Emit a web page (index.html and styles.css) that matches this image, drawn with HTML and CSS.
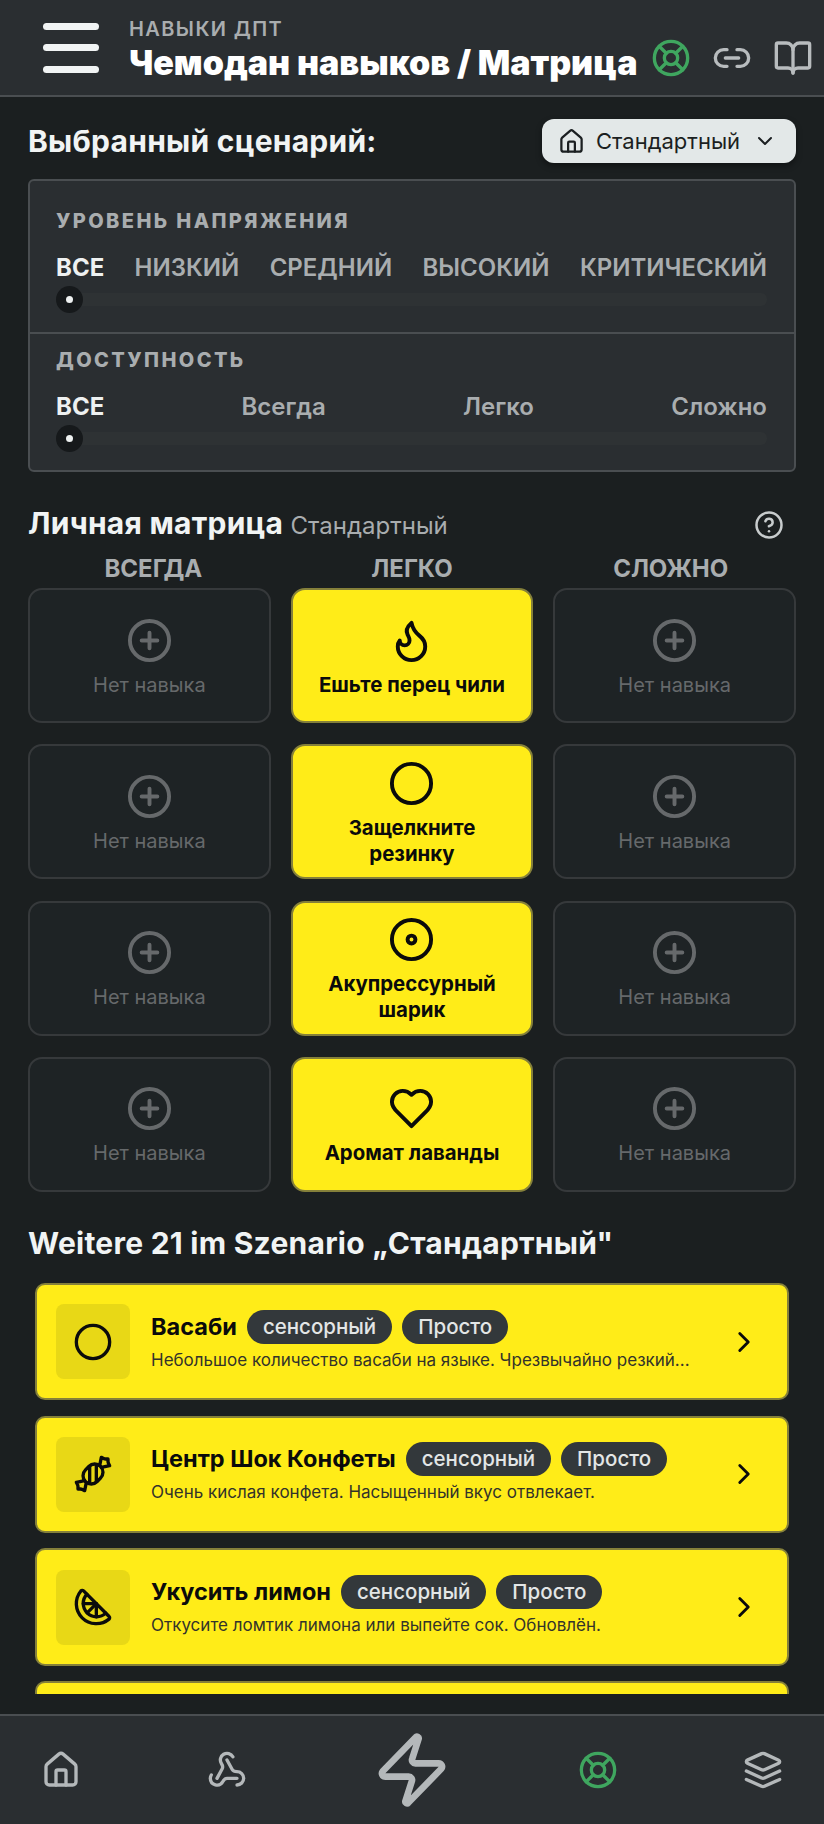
FILE: index.html
```html
<!DOCTYPE html>
<html>
<head>
    <title>Навыки ДПТ</title>
    <link rel="stylesheet" href="styles.css">
</head>
<body>
    <svg class="sprite" width="0" height="0">
        <symbol id="i-buoy" viewBox="0 0 24 24"><circle cx="12" cy="12" r="10"/><path d="m4.93 4.93 4.24 4.24M14.83 9.17l4.24-4.24M14.83 14.83l4.24 4.24M9.17 14.83l-4.24 4.24"/><circle cx="12" cy="12" r="4"/></symbol>
        <symbol id="i-link" viewBox="0 0 24 24"><path d="M9 17H7A5 5 0 0 1 7 7h2"/><path d="M15 7h2a5 5 0 1 1 0 10h-2"/><path d="M8 12h8"/></symbol>
        <symbol id="i-book" viewBox="0 0 24 24"><path d="M12 7v14"/><path d="M3 18a1 1 0 0 1-1-1V4a1 1 0 0 1 1-1h5a4 4 0 0 1 4 4 4 4 0 0 1 4-4h5a1 1 0 0 1 1 1v13a1 1 0 0 1-1 1h-6a3 3 0 0 0-3 3 3 3 0 0 0-3-3z"/></symbol>
        <symbol id="i-house" viewBox="0 0 24 24"><path d="M15 21v-8a1 1 0 0 0-1-1h-4a1 1 0 0 0-1 1v8"/><path d="M3 10a2 2 0 0 1 .709-1.528l7-5.999a2 2 0 0 1 2.582 0l7 5.999A2 2 0 0 1 21 10v9a2 2 0 0 1-2 2H5a2 2 0 0 1-2-2z"/></symbol>
        <symbol id="i-webhook" viewBox="0 0 24 24"><path d="M18 16.98h-5.99c-1.1 0-1.95.94-2.48 1.9A4 4 0 0 1 2 17c.01-.7.2-1.4.57-2"/><path d="m6 17 3.13-5.78c.53-.97.1-2.18-.5-3.1a4 4 0 1 1 6.89-4.06"/><path d="m12 6 3.13 5.73C15.66 12.7 16.9 13 18 13a4 4 0 0 1 0 8"/></symbol>
        <symbol id="i-zap" viewBox="0 0 24 24"><path d="M4 14a1 1 0 0 1-.78-1.63l9.9-10.2a.5.5 0 0 1 .86.46l-1.92 6.02A1 1 0 0 0 13 10h7a1 1 0 0 1 .78 1.63l-9.9 10.2a.5.5 0 0 1-.86-.46l1.92-6.02A1 1 0 0 0 11 14z"/></symbol>
        <symbol id="i-layers" viewBox="0 0 24 24"><path d="M12.83 2.18a2 2 0 0 0-1.66 0L2.6 6.08a1 1 0 0 0 0 1.83l8.58 3.91a2 2 0 0 0 1.66 0l8.58-3.9a1 1 0 0 0 0-1.83Z"/><path d="m22 17.65-9.17 4.16a2 2 0 0 1-1.66 0L2 17.65"/><path d="m22 12.65-9.17 4.16a2 2 0 0 1-1.66 0L2 12.65"/></symbol>
        <symbol id="i-flame" viewBox="0 0 24 24"><path d="M8.5 14.5A2.5 2.5 0 0 0 11 12c0-1.38-.5-2-1-3-1.072-2.143-.224-4.054 2-6 .5 2.5 2 4.9 4 6.5 2 1.6 3 3.5 3 5.5a7 7 0 1 1-14 0c0-1.153.433-2.294 1-3a2.5 2.5 0 0 0 2.5 2.5z"/></symbol>
        <symbol id="i-circle" viewBox="0 0 24 24"><circle cx="12" cy="12" r="10"/></symbol>
        <symbol id="i-disc" viewBox="0 0 24 24"><circle cx="12" cy="12" r="10"/><circle cx="12" cy="12" r="2"/></symbol>
        <symbol id="i-heart" viewBox="0 0 24 24"><path d="M19 14c1.49-1.46 3-3.21 3-5.5A5.5 5.5 0 0 0 16.5 3c-1.76 0-3 .5-4.5 2-1.5-1.5-2.74-2-4.5-2A5.5 5.5 0 0 0 2 8.5c0 2.3 1.5 4.05 3 5.5l7 7Z"/></symbol>
        <symbol id="i-plus" viewBox="0 0 24 24"><circle cx="12" cy="12" r="10"/><path d="M8 12h8M12 8v8"/></symbol>
        <symbol id="i-help" viewBox="0 0 24 24"><circle cx="12" cy="12" r="10"/><path d="M9.09 9a3 3 0 0 1 5.83 1c0 2-3 3-3 3"/><path d="M12 17h.01"/></symbol>
        <symbol id="i-candy" viewBox="0 0 24 24"><path d="m9.5 7.5-2 2a4.95 4.95 0 1 0 7 7l2-2a4.95 4.95 0 1 0-7-7Z"/><path d="M14 6.5v10"/><path d="M10 7.5v10"/><path d="m16 7 1-5 1.37.68A3 3 0 0 0 19.7 3H21v1.3c0 .46.1.92.32 1.33L22 7l-5 1"/><path d="m8 17-1 5-1.37-.68A3 3 0 0 0 4.3 21H3v-1.3a3 3 0 0 0-.32-1.33L2 17l5-1"/></symbol>
        <symbol id="i-citrus" viewBox="0 0 24 24"><path d="M21.66 17.67a1.08 1.08 0 0 1-.04 1.6A12 12 0 0 1 4.73 2.38a1.1 1.1 0 0 1 1.61-.04z"/><path d="M19.65 15.66A8 8 0 0 1 8.35 4.34"/><path d="m14 10-5.5 5.5"/><path d="M14 17.85V10H6.15"/></symbol>
        <symbol id="i-right" viewBox="0 0 24 24"><path d="m9 18 6-6-6-6"/></symbol>
        <symbol id="i-down" viewBox="0 0 24 24"><path d="m6 9 6 6 6-6"/></symbol>
    </svg>

    <div class="app">
        <header class="topbar">
            <div class="burger"><span></span><span></span><span></span></div>
            <div class="titles">
                <div class="kicker">НАВЫКИ ДПТ</div>
                <h1>Чемодан навыков / Матрица</h1>
            </div>
            <svg class="icon top-buoy"><use href="#i-buoy"/></svg>
            <svg class="icon top-link"><use href="#i-link"/></svg>
            <svg class="icon top-book"><use href="#i-book"/></svg>
        </header>

        <main class="content">
            <div class="scenario-row">
                <h2>Выбранный сценарий:</h2>
                <div class="select">
                    <svg class="icon select-home"><use href="#i-house"/></svg>
                    <span>Стандартный</span>
                    <svg class="icon"><use href="#i-down"/></svg>
                </div>
            </div>

            <section class="filters">
                <div class="filter">
                    <div class="filter-label">УРОВЕНЬ НАПРЯЖЕНИЯ</div>
                    <div class="steps"><b>ВСЕ</b><span>НИЗКИЙ</span><span>СРЕДНИЙ</span><span>ВЫСОКИЙ</span><span>КРИТИЧЕСКИЙ</span></div>
                    <div class="track"><i class="thumb"></i></div>
                </div>
                <div class="filter">
                    <div class="filter-label">ДОСТУПНОСТЬ</div>
                    <div class="steps"><b>ВСЕ</b><span>Всегда</span><span>Легко</span><span>Сложно</span></div>
                    <div class="track"><i class="thumb"></i></div>
                </div>
            </section>

            <div class="matrix-head">
                <h2>Личная матрица <small>Стандартный</small></h2>
                <svg class="icon"><use href="#i-help"/></svg>
            </div>

            <div class="col-titles">
                <div>ВСЕГДА</div><div>ЛЕГКО</div><div>СЛОЖНО</div>
            </div>

            <div class="matrix">
                <div class="slot"><svg class="icon"><use href="#i-plus"/></svg><span>Нет навыка</span></div>
                <div class="slot filled"><svg class="icon"><use href="#i-flame"/></svg><span>Ешьте перец чили</span></div>
                <div class="slot"><svg class="icon"><use href="#i-plus"/></svg><span>Нет навыка</span></div>

                <div class="slot"><svg class="icon"><use href="#i-plus"/></svg><span>Нет навыка</span></div>
                <div class="slot filled"><svg class="icon"><use href="#i-circle"/></svg><span>Защелкните резинку</span></div>
                <div class="slot"><svg class="icon"><use href="#i-plus"/></svg><span>Нет навыка</span></div>

                <div class="slot"><svg class="icon"><use href="#i-plus"/></svg><span>Нет навыка</span></div>
                <div class="slot filled"><svg class="icon"><use href="#i-disc"/></svg><span>Акупрессурный шарик</span></div>
                <div class="slot"><svg class="icon"><use href="#i-plus"/></svg><span>Нет навыка</span></div>

                <div class="slot"><svg class="icon"><use href="#i-plus"/></svg><span>Нет навыка</span></div>
                <div class="slot filled"><svg class="icon"><use href="#i-heart"/></svg><span>Аромат лаванды</span></div>
                <div class="slot"><svg class="icon"><use href="#i-plus"/></svg><span>Нет навыка</span></div>
            </div>

            <h2 class="more-title">Weitere 21 im Szenario „Стандартный"</h2>

            <div class="skill-list">
                <div class="skill">
                    <div class="skill-icon"><svg class="icon"><use href="#i-circle"/></svg></div>
                    <div class="skill-body">
                        <div class="skill-top"><strong>Васаби</strong><em>сенсорный</em><em>Просто</em></div>
                        <p>Небольшое количество васаби на языке. Чрезвычайно резкий...</p>
                    </div>
                    <svg class="icon chevron"><use href="#i-right"/></svg>
                </div>
                <div class="skill">
                    <div class="skill-icon"><svg class="icon"><use href="#i-candy"/></svg></div>
                    <div class="skill-body">
                        <div class="skill-top"><strong>Центр Шок Конфеты</strong><em>сенсорный</em><em>Просто</em></div>
                        <p>Очень кислая конфета. Насыщенный вкус отвлекает.</p>
                    </div>
                    <svg class="icon chevron"><use href="#i-right"/></svg>
                </div>
                <div class="skill">
                    <div class="skill-icon"><svg class="icon"><use href="#i-citrus"/></svg></div>
                    <div class="skill-body">
                        <div class="skill-top"><strong>Укусить лимон</strong><em>сенсорный</em><em>Просто</em></div>
                        <p>Откусите ломтик лимона или выпейте сок. Обновлён.</p>
                    </div>
                    <svg class="icon chevron"><use href="#i-right"/></svg>
                </div>
                <div class="skill"></div>
            </div>
        </main>

        <nav class="tabbar">
            <svg class="icon"><use href="#i-house"/></svg>
            <svg class="icon"><use href="#i-webhook"/></svg>
            <svg class="icon tab-zap"><use href="#i-zap"/></svg>
            <svg class="icon tab-active"><use href="#i-buoy"/></svg>
            <svg class="icon"><use href="#i-layers"/></svg>
        </nav>
    </div>
</body>
</html>
```

FILE: styles.css
```css
* { box-sizing: border-box; }
html, body { margin: 0; height: 100%; }
body { background: #1b1f20; color: #f1f4f4; font-family: Inter, "Noto Sans", sans-serif; }
h1, h2, p { margin: 0; }
.sprite { display: block; }
.icon { width: 24px; height: 24px; fill: none; stroke: currentColor; stroke-width: 2; stroke-linecap: round; stroke-linejoin: round; flex: none; }

.app { height: 1824px; display: flex; flex-direction: column; overflow: hidden; }

.topbar { height: 97px; flex: none; display: flex; align-items: center; padding: 0 11px 0 43px; background: #2a2e31; border-bottom: 2px solid #4a4e51; }
.burger { width: 56px; height: 50px; display: flex; flex-direction: column; justify-content: space-between; margin-right: 30px; flex: none; }
.burger span { height: 7px; border-radius: 4px; background: #f1f4f4; }
.titles { flex: 1; min-width: 0; align-self: flex-start; padding-top: 17px; }
.kicker { font-size: 20px; line-height: 24px; font-weight: 600; letter-spacing: 1.4px; color: #a9adaf; }
h1 { margin-top: 1px; font-size: 34px; line-height: 42px; font-weight: 900; letter-spacing: 0; color: #fff; white-space: nowrap; }
.top-buoy { width: 40px; height: 40px; color: #3fa65f; margin-top: 21px; }
.top-link { width: 40px; height: 40px; color: #b8bcbe; margin: 21px 0 0 21px; }
.top-book { width: 40px; height: 40px; color: #b8bcbe; margin: 21px 0 0 21px; }

.content { flex: 1; min-height: 0; overflow: hidden; padding: 0 28px; margin-bottom: 20px; }

.scenario-row { display: flex; justify-content: space-between; align-items: center; padding: 22px 0 16px; }
h2 { font-size: 30px; line-height: 36px; font-weight: 700; letter-spacing: 0.25px; }
.select { width: 254px; height: 44px; display: flex; align-items: center; gap: 11px; padding: 0 19px 0 16px; border-radius: 12px; background: #e3e8e8; color: #1b1f21; font-size: 22px; box-shadow: 0 3px 6px rgba(0,0,0,0.4); }
.select span { flex: 1; }
.select-home { width: 27px; height: 27px; }

.filters { border: 2px solid #4a4e51; border-radius: 6px; background: #2a2e31; }
.filter { padding: 28px 27px 0 26px; height: 151px; }
.filter + .filter { border-top: 2px solid #4a4e51; height: 138px; padding-top: 14px; }
.filter-label { font-size: 20px; line-height: 24px; font-weight: 800; letter-spacing: 2.4px; color: #a9adaf; }
.steps { display: flex; justify-content: space-between; margin-top: 19px; font-size: 24px; line-height: 32px; font-weight: 600; color: #a9adaf; }
.steps b { color: #eef1f1; font-weight: 700; }
.track { position: relative; height: 13px; margin-top: 9px; border-radius: 6px; background: #2e3234; }
.thumb { position: absolute; left: 0; top: -7px; width: 27px; height: 27px; border-radius: 50%; background: #16191b; }
.thumb::after { content: ""; position: absolute; left: 10px; top: 10px; width: 7px; height: 7px; border-radius: 50%; background: #eef1f1; }

.matrix-head { display: flex; justify-content: space-between; align-items: center; padding: 33px 12px 0 0; }
.matrix-head .icon { width: 30px; height: 30px; color: #c8cccd; }
small { font-size: 24px; font-weight: 400; letter-spacing: 0; color: #a9adaf; }

.col-titles { display: grid; grid-template-columns: repeat(3, 1fr); gap: 20px; padding: 0 6px; margin-top: 10px; text-align: center; font-size: 24px; line-height: 30px; font-weight: 700; color: #a9adaf; }

.matrix { display: grid; grid-template-columns: repeat(3, 1fr); gap: 21.33px 20px; margin-top: 4px; }
.slot { height: 135px; display: flex; flex-direction: column; align-items: center; justify-content: center; padding: 3px 14px 0; gap: 8px; border: 2px solid #36393b; border-radius: 14px; background: #1e2325; color: #66696b; text-align: center; font-size: 20px; line-height: 26px; }
.slot .icon { width: 47px; height: 47px; }
.slot.filled { background: #ffec18; border-color: #85803a; color: #0b0b0b; font-size: 20.4px; font-weight: 700; }

.more-title { margin-top: 33.5px; }

.skill-list { display: flex; flex-direction: column; gap: 15.2px; margin: 21.5px 7px 0; }
.skill { height: 117.5px; flex: none; display: flex; align-items: center; padding: 0 26px 0 19px; border: 2px solid #85803a; border-radius: 10px; background: #ffec18; color: #0b0b0b; }
.skill-icon { width: 74px; height: 75px; display: flex; align-items: center; justify-content: center; border-radius: 8px; background: #e8d816; flex: none; margin-right: 21px; }
.skill-icon .icon { width: 40px; height: 40px; }
.skill-body { flex: 1; min-width: 0; margin-top: -3px; }
.skill-top { display: flex; align-items: center; gap: 10px; }
.skill-top strong { font-size: 23.5px; line-height: 34px; font-weight: 700; }
.skill-top em { height: 34px; padding: 0 16px; border-radius: 17px; background: #33383b; color: #e3e6e6; font-style: normal; font-weight: 500; font-size: 20.5px; line-height: 33px; }
.skill p { font-size: 17px; line-height: 22px; margin-top: 5px; color: #33332a; white-space: nowrap; }
.chevron { width: 34px; height: 34px; }

.tabbar { height: 110px; flex: none; display: flex; align-items: center; justify-content: space-between; padding: 0 41px; background: #2a2e31; border-top: 2px solid #4a4e51; color: #b4b8ba; }
.tabbar .icon { width: 40px; height: 40px; }
.tabbar .tab-zap { width: 80px; height: 80px; }
.tabbar .tab-active { color: #3fa65f; }
```
